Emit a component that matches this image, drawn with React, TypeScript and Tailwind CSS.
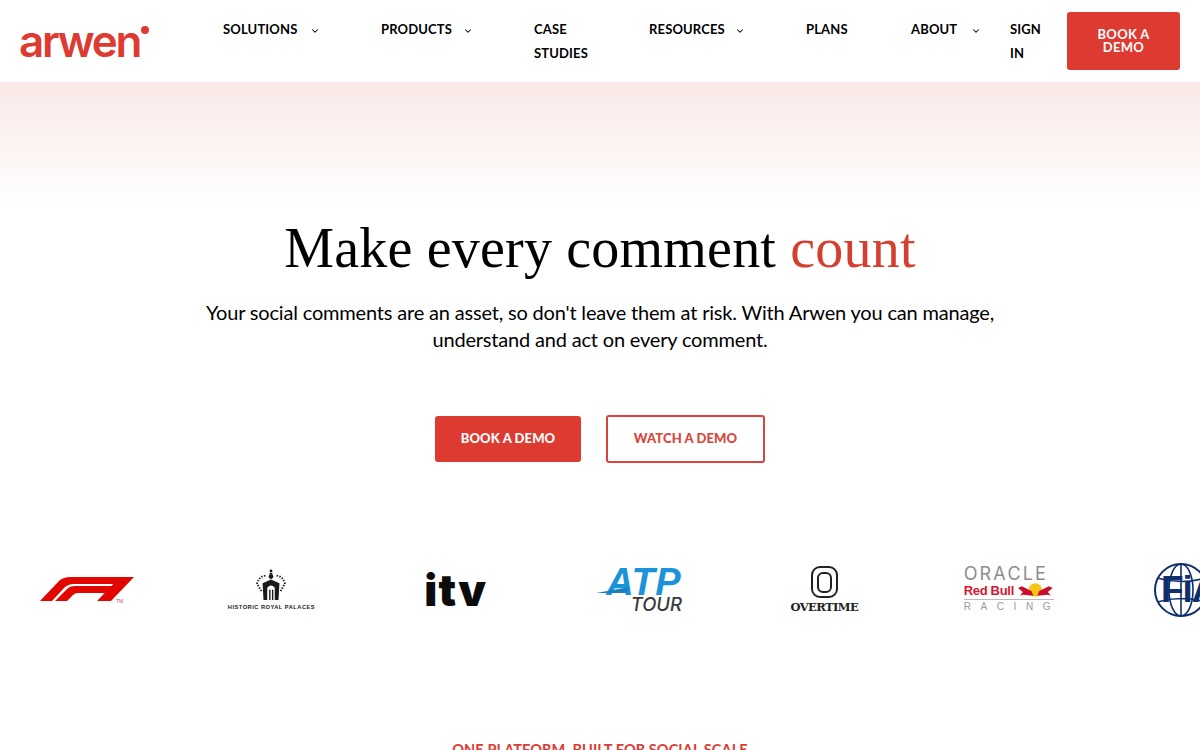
import { ChevronDown } from 'lucide-react';

const navItems = [
  { label: 'SOLUTIONS', width: 'w-[158px]', gap: 'w-[87px]', arrow: true },
  { label: 'PRODUCTS', width: 'w-[153px]', gap: 'w-[82px]', arrow: true },
  { label: 'CASE STUDIES', width: 'w-[115px]', gap: 'w-[60px]', arrow: false },
  { label: 'RESOURCES', width: 'w-[157px]', gap: 'w-[86px]', arrow: true },
  { label: 'PLANS', width: 'w-[105px]', gap: '', arrow: false },
  { label: 'ABOUT', width: 'w-[99px]', gap: 'w-[60px]', arrow: true },
  { label: 'SIGN IN', width: 'w-[57px]', gap: 'w-[40px]', arrow: false },
];

function F1Logo() {
  return (
    <svg width="94" height="26" viewBox="0 0 94 26" fill="#e10600">
      <path d="M0 24L19 4Q23 0 31 0L82 0L75 7L34 7Q28 7 24 11L12 24Z" />
      <path d="M15 24L27 12Q30 9 35 9L73 9L66 16L38 16Q35 16 33 18L27 24Z" />
      <path d="M94 0L71 24L57 24L80 0Z" />
      <text x="76" y="26" fontSize="5" fill="#b55" fontFamily="Liberation Sans, sans-serif">TM</text>
    </svg>
  );
}

function PalacesLogo() {
  return (
    <div className="flex flex-col items-center">
      <svg width="30" height="32" viewBox="0 0 32 34" fill="#1a1a1a">
        <circle cx="16" cy="2" r="1.5" />
        <rect x="14.5" y="4" width="3" height="2" />
        <circle cx="16" cy="8" r="2.5" />
        <path d="M1 16Q3 8 10 7M31 16Q29 8 22 7" fill="none" stroke="#1a1a1a" strokeWidth="2" strokeDasharray="1.5 1.5" />
        <path d="M2 17L6 24M30 17L26 24" fill="none" stroke="#1a1a1a" strokeWidth="2" strokeDasharray="1.5 1.5" />
        <path d="M16 11L7 15L8 33L12 33L12 20Q16 15 20 20L20 33L24 33L25 15Z" />
        <rect x="14" y="22" width="1.5" height="11" />
        <rect x="17" y="22" width="1.5" height="11" />
      </svg>
      <span className="mt-[2px] text-[5.7px] leading-[8px] font-bold tracking-[0.5px] whitespace-nowrap text-[#222] font-['Liberation_Sans',sans-serif]">
        HISTORIC ROYAL PALACES
      </span>
    </div>
  );
}

function ItvLogo() {
  return (
    <span className="block h-[32px] text-[44px] leading-[32px] font-black tracking-[1.2px] text-[#0b0b0b] font-['Inter',sans-serif]">
      itv
    </span>
  );
}

function AtpLogo() {
  return (
    <div className="relative h-[42px] w-[88px] italic">
      <span className="absolute right-[3px] top-[-1px] text-[38px] leading-[28px] font-bold tracking-[0.5px] text-[#1b93d9] font-['Liberation_Sans',sans-serif]">
        ATP
      </span>
      <svg className="absolute left-0 top-[18px]" width="34" height="8" viewBox="0 0 34 8" fill="#1b7fc4">
        <path d="M0 6L34 0L30 6Z" />
      </svg>
      <span className="absolute right-[2px] bottom-0 text-[18.5px] leading-[14px] font-medium text-[#3a3a3c] font-['Inter',sans-serif]">
        TOUR
      </span>
    </div>
  );
}

function OvertimeLogo() {
  return (
    <div className="flex flex-col items-center">
      <div className="flex h-[32px] w-[27px] items-center justify-center rounded-[9px] border-[2.5px] border-[#222]">
        <div className="h-[21px] w-[15px] rounded-[6px] border-[2px] border-[#222]" />
      </div>
      <span className="mt-[3px] text-[11.5px] leading-[13px] font-bold whitespace-nowrap text-[#222] tracking-[-0.6px] font-['DejaVu_Serif',serif]">
        OVERTIME
      </span>
    </div>
  );
}

function RedBullLogo() {
  return (
    <div className="flex w-[90px] flex-col font-['Liberation_Sans',sans-serif]">
      <span className="text-[18px] leading-[13px] tracking-[2.2px] whitespace-nowrap text-[#8d8d8d] font-['Inter',sans-serif] font-normal">
        ORACLE
      </span>
      <div className="mt-[1px] flex h-[19px] items-center gap-[3px] border-b border-[#bbb]">
        <span className="text-[13px] leading-[15px] font-bold tracking-[-0.3px] whitespace-nowrap text-[#d5182f]">
          Red Bull
        </span>
        <svg width="38" height="15" viewBox="0 0 38 15">
          <circle cx="19" cy="7" r="7" fill="#f5c518" />
          <path d="M1 5L5 3L15 8L17 13L6 12L3 13L6 9Z" fill="#c8102e" />
          <path d="M37 5L33 3L23 8L21 13L32 12L35 13L32 9Z" fill="#c8102e" />
        </svg>
      </div>
      <span className="mt-[1px] text-[10px] leading-[12px] tracking-[9.6px] whitespace-nowrap text-[#9a9a9a] font-light">
        RACING
      </span>
    </div>
  );
}

function FiaLogo() {
  return (
    <div className="relative h-[54px] w-[78px]">
      <svg width="54" height="54" viewBox="0 0 54 54" fill="none" stroke="#0e2f6b" strokeWidth="1.6">
        <circle cx="27" cy="27" r="26" strokeWidth="2" />
        <ellipse cx="27" cy="27" rx="12" ry="26" />
        <path d="M27 1V53M3 15Q27 22 51 15M3 39Q27 32 51 39" />
      </svg>
      <span className="absolute left-[7px] top-[8px] text-[37px] leading-[38px] font-bold tracking-[-1px] whitespace-nowrap text-[#0e2f6b] font-['Liberation_Sans',sans-serif]">
        FiA
      </span>
    </div>
  );
}

const logos = [F1Logo, PalacesLogo, ItvLogo, AtpLogo, OvertimeLogo, RedBullLogo, FiaLogo];

export default function App() {
  return (
    <div className="h-screen overflow-hidden bg-white font-['Lato',sans-serif] text-black">
      {/* Top nav */}
      <header className="flex h-[82px] items-start pl-5 pr-5 bg-white">
        <div className="relative w-[203px] pt-[16px]">
          <span className="ml-[-1px] text-[44px] leading-[50px] font-semibold tracking-[-2.2px] text-[#dd3a32] font-['Inter',sans-serif]">
            arwen
          </span>
          <span className="absolute left-[121px] top-[26px] h-[8px] w-[8px] rounded-full bg-[#dd3a32]" />
        </div>
        <nav className="flex pt-[17px]">
          {navItems.map((item) => (
            <div key={item.label} className={`flex items-start ${item.width}`}>
              <span className={`text-[13px] leading-[24px] font-bold tracking-[0.15px] ${item.gap}`}>{item.label}</span>
              {item.arrow && <ChevronDown size={10} strokeWidth={2.5} className="mt-[9px] shrink-0" />}
            </div>
          ))}
        </nav>
        <button className="mt-3 flex h-[58px] w-[113px] items-center justify-center rounded-[3px] bg-[#dd3a32] px-6 text-[13px] leading-[13px] font-bold tracking-[0.3px] text-white">
          BOOK A DEMO
        </button>
      </header>

      {/* Hero */}
      <div className="h-[128px] bg-gradient-to-b from-[#f9e9e7] to-white" />
      <section className="flex flex-col items-center">
        <h1 className="text-[56px] leading-[76px] font-normal tracking-[0.2px] font-['Liberation_Serif',serif]">
          Make every comment <span className="text-[#d43f30]">count</span>
        </h1>
        <p className="mt-[13px] w-[800px] text-center text-[20px] leading-[27px] tracking-[-0.18px]">
          Your social comments are an asset, so don't leave them at risk. With Arwen you can manage, understand and act on every comment.
        </p>
        <div className="mt-[62px] flex items-center gap-[25px]">
          <button className="h-[46px] w-[146px] rounded-[3px] bg-[#dd3a32] text-[13px] font-black tracking-[0.1px] text-white">
            BOOK A DEMO
          </button>
          <button className="h-[48px] w-[159px] rounded-[3px] border-2 border-[#d9443c] text-[13px] font-black tracking-[0.1px] text-[#d9443c]">
            WATCH A DEMO
          </button>
        </div>
      </section>

      {/* Client logos */}
      <div className="mt-[100px] ml-[-5px] flex h-[54px] items-center">
        {logos.map((Logo, i) => (
          <div key={i} className="flex w-[184.3px] shrink-0 justify-center">
            <Logo />
          </div>
        ))}
      </div>

      <p className="mt-[123px] text-center text-[14.5px] leading-[20px] font-bold tracking-[0.1px] text-[#dd3a32]">
        ONE PLATFORM, BUILT FOR SOCIAL SCALE
      </p>
    </div>
  );
}
